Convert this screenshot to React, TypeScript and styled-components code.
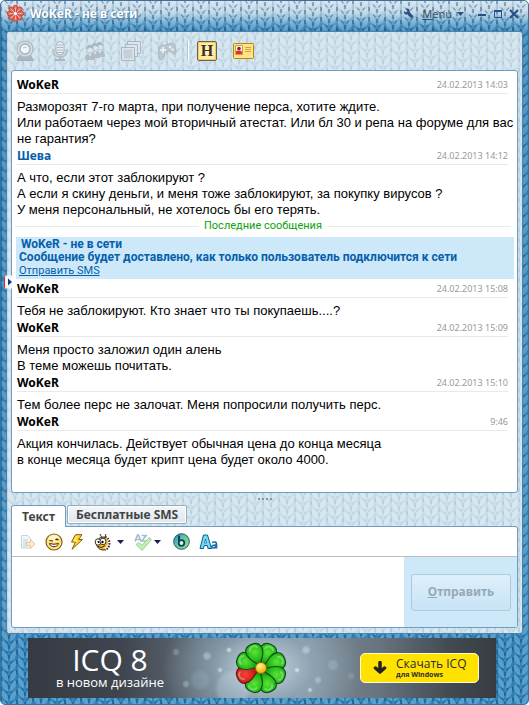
import React from "react";
import styled, { createGlobalStyle, css } from "styled-components";

const svgUrl = (svg: string) => `url("data:image/svg+xml,${encodeURIComponent(svg)}")`;

/* One tile of stocking stitch, drawn translucent so that it can lie on any colour. */
const knitTile = (dark: string, darkOpacity: number, lightOpacity: number) =>
  svgUrl(
    `<svg xmlns="http://www.w3.org/2000/svg" width="48" height="20" viewBox="0 0 48 20">
      <defs>
        <filter id="soft" x="-10" y="-10" width="70" height="40" filterUnits="userSpaceOnUse"><feGaussianBlur stdDeviation=".7"/></filter>
        <g id="s">
          <ellipse cx="4" cy="5" rx="2.4" ry="5.6" transform="rotate(-26 4 5)" fill="#fff" fill-opacity="${lightOpacity}"/>
          <ellipse cx="12" cy="5" rx="2.4" ry="5.6" transform="rotate(26 12 5)" fill="#fff" fill-opacity="${lightOpacity}"/>
          <path d="M8 4v4" stroke="${dark}" stroke-opacity="${darkOpacity}" stroke-width="2.2"/>
          <path d="M4 9.500l2.500 3M12 9.500l-2.500 3" stroke="${dark}" stroke-opacity="${darkOpacity}" stroke-width="1.200"/>
        </g>
        <g id="c">
          <path d="M0 -4v28" stroke="${dark}" stroke-opacity="${darkOpacity}" stroke-width="1.8" stroke-dasharray="4 6"/>
          <path d="M0 -4v28" stroke="${dark}" stroke-opacity="${darkOpacity / 3}" stroke-width="2"/>
        </g>
      </defs>
      <g fill="none" filter="url(#soft)">
        <use href="#c"/><use href="#c" x="16" y="3"/><use href="#c" x="32"/><use href="#c" x="48"/>
        <use href="#s" y="-10"/><use href="#s"/><use href="#s" y="10"/><use href="#s" y="20"/>
        <use href="#s" x="16" y="-13"/><use href="#s" x="16" y="-3"/><use href="#s" x="16" y="7"/><use href="#s" x="16" y="17"/>
        <use href="#s" x="32" y="-16"/><use href="#s" x="32" y="-6"/><use href="#s" x="32" y="4"/><use href="#s" x="32" y="14"/>
      </g>
    </svg>`
  );

const ui = `"Noto Sans", "Open Sans", sans-serif`;
const edge = "#6c9dc3";
const line = "#e9e9e9";

const GlobalStyle = createGlobalStyle`
  *, *::before, *::after { box-sizing: border-box; }
  body { margin: 0; background: #fff; font: 11px/16px ${ui}; color: #000; }
  button, textarea { font: inherit; color: inherit; margin: 0; border: 0; padding: 0; background: none; }
  p { margin: 0; }
  svg { display: block; }
`;

const Window = styled.main`
  display: flex;
  flex-direction: column;
  min-height: 100vh;
  padding: 0 5px 6px;
  border: 1px solid #39739c;
  border-radius: 5px;
  background:
    ${knitTile("#04335c", 0.34, 0.2)},
    linear-gradient(#d3e1ec 0, #b4d1e3 12px, #5b9fca 22px, #2a7bb3 31px, #3387bd 100%);
`;

const TitleBar = styled.header`
  display: flex;
  align-items: center;
  height: 30px;
  padding: 0 4px 5px 1px;
`;

const Title = styled.h1`
  flex: 1;
  margin: 0 0 0 6px;
  font: bold 12px/16px ${ui};
  color: #fff;
  text-shadow: 1px 1px 1px #4d7fa5, 0 0 2px #6d97b7;
`;

const MenuButton = styled.button`
  display: flex;
  align-items: center;
  gap: 5px;
  margin: 0 13px 0 8px;
  font-size: 11px;
  color: #3a5068;
`;

const IconButton = styled.button`
  display: flex;
  align-items: center;
  justify-content: center;
`;

const WindowButtons = styled.div`
  display: flex;
  gap: 6px;
`;

const Panel = styled.section`
  display: flex;
  flex-direction: column;
  flex: 1;
  padding: 0 4px 5px;
  border: 1px solid #4d82aa;
  border-radius: 3px;
  background: ${knitTile("#6b7f96", 0.15, 0.24)}, #cbdfeb;
`;

const Toolbar = styled.nav`
  display: flex;
  align-items: center;
  gap: 16px;
  height: 38px;
  padding: 0 4px;
`;

const ToolSeparator = styled.span`
  width: 2px;
  height: 20px;
  margin: 0 -8px 0 -6px;
  border-left: 1px solid #b4c5d1;
  background: #fff;
`;

const LogFrame = styled.div`
  position: relative;
  display: flex;
  flex: 1;
  flex-direction: column;
`;

const Log = styled.div`
  flex: 1;
  padding: 6px 3px;
  border: 1px solid ${edge};
  border-radius: 3px;
  background: #fff;
`;

const Handle = styled.button`
  position: absolute;
  top: 50%;
  left: -7px;
  width: 8px;
  height: 13px;
  padding-left: 3px;
  border-left: 1px solid #e81c1c;
  border-radius: 2px 0 0 2px;
  background: #f3f8fb;
  transform: translateY(-50%);
`;

const Message = styled.article`
  padding-left: 2px;
`;

const MessageHead = styled.header`
  display: flex;
  align-items: center;
  justify-content: space-between;
  height: 17px;
  margin-right: 6px;
  border-bottom: 1px solid ${line};
`;

const Author = styled.strong<{ $own?: boolean }>`
  font: bold 12px/16px ${ui};
  color: ${(p) => (p.$own ? "#0560ac" : "#000")};
`;

const Time = styled.time`
  font-size: 9px;
  color: #999;
`;

const MessageText = styled.p`
  padding: 5px 0 1px;
  font: 13px/16px "Liberation Sans", Arial, sans-serif;
  white-space: pre-line;
`;

const Divider = styled.div`
  display: flex;
  align-items: center;
  gap: 5px;
  height: 14px;
  margin-bottom: 4px;
  padding-right: 3px;
  font: 11px/14px Roboto, "Noto Sans", sans-serif;
  color: #0aa30a;

  &::before,
  &::after {
    content: "";
    flex: 1;
    height: 1px;
    background: ${line};
  }
`;

const Notice = styled.aside`
  height: 42px;
  margin: 0 0 2px 1px;
  padding: 1px 3px;
  background: #cde8f9;
  font: bold 12px/13px Roboto, "Noto Sans", sans-serif;
  color: #0560ac;
`;

const NoticeTitle = styled.p`
  padding-left: 2px;
`;

const NoticeLink = styled.a`
  display: block;
  font: 11px/13px Roboto, "Noto Sans", sans-serif;
  color: #0560ac;
`;

const Grip = styled.div`
  display: flex;
  align-items: center;
  justify-content: center;
  gap: 2px;
  height: 12px;
`;

const GripDot = styled.span`
  width: 2px;
  height: 2px;
  background: #8697a4;
`;

const Tabs = styled.div`
  display: flex;
  align-items: flex-start;
  gap: 1px;
  margin-bottom: -1px;
`;

const Tab = styled.button<{ $active?: boolean }>`
  height: 19px;
  padding: 0 8px;
  border: 1px solid #9aabb8;
  border-radius: 2px;
  background: linear-gradient(#f2f6f9, #dde7ee);
  box-shadow: inset 0 0 0 1px #fff;
  font: bold 12px/16px ${ui};
  color: #444;
  ${(p) =>
    p.$active &&
    css`
      z-index: 1;
      height: 22px;
      padding: 0 10px;
      border-color: ${edge};
      border-bottom: 0;
      border-radius: 3px 3px 0 0;
      background: #fff;
    `}
`;

const Composer = styled.form`
  border: 1px solid ${edge};
  border-radius: 0 3px 3px 3px;
  background: #fff;
`;

const FormatBar = styled.div`
  display: flex;
  align-items: center;
  height: 30px;
  padding: 0 8px;
  border-bottom: 1px solid #bdbdbd;
`;

const FormatButton = styled(IconButton)<{ $gap?: number }>`
  margin-right: ${(p) => p.$gap ?? 2}px;
`;

const EntryRow = styled.div`
  display: flex;
  height: 70px;
`;

const EntryText = styled.textarea`
  flex: 1;
  min-width: 0;
  padding: 4px;
  resize: none;
  outline: 0;
  font: 13px/16px "Liberation Sans", Arial, sans-serif;
`;

const SendArea = styled.div`
  display: flex;
  align-items: center;
  padding: 0 6px 0 7px;
  background: #cde8f9;
`;

const SendButton = styled.button`
  width: 100px;
  height: 37px;
  border: 1px solid #b0cadb;
  border-radius: 3px;
  background: linear-gradient(#def0fb, #c8e3f5);
  font: bold 12px/16px ${ui};
  color: #97a9b6;
`;

const Banner = styled.a`
  display: flex;
  align-items: center;
  justify-content: space-between;
  width: 468px;
  height: 60px;
  margin: 4px 0 0 22px;
  padding: 0 17px 0 30px;
  color: #fff;
  text-decoration: none;
  background:
    radial-gradient(circle at 205px 50px, rgba(215, 232, 242, 0.25) 0 14px, transparent 19px),
    radial-gradient(circle at 172px 42px, rgba(190, 212, 226, 0.15) 0 7px, transparent 11px),
    radial-gradient(circle at 158px 46px, rgba(180, 210, 225, 0.4) 0 2px, transparent 4px),
    radial-gradient(circle at 148px 14px, rgba(180, 210, 225, 0.3) 0 2px, transparent 4px),
    radial-gradient(circle at 179px 18px, rgba(215, 232, 242, 0.4) 0 2px, transparent 5px),
    radial-gradient(circle at 201px 12px, rgba(235, 245, 250, 0.6) 0 1px, transparent 3px),
    radial-gradient(circle at 210px 26px, rgba(235, 245, 250, 0.6) 0 1px, transparent 3px),
    radial-gradient(circle at 192px 32px, rgba(235, 245, 250, 0.5) 0 1px, transparent 3px),
    radial-gradient(circle at 269px 32px, rgba(235, 245, 250, 0.6) 0 1px, transparent 3px),
    radial-gradient(circle at 282px 52px, rgba(235, 245, 250, 0.5) 0 1px, transparent 3px),
    radial-gradient(circle at 278px 12px, rgba(225, 238, 246, 0.4) 0 2px, transparent 5px),
    radial-gradient(circle at 305px 27px, rgba(200, 220, 232, 0.2) 0 4px, transparent 6px),
    radial-gradient(circle at 323px 38px, rgba(190, 212, 226, 0.2) 0 2px, transparent 4px),
    radial-gradient(circle at 290px 42px, rgba(225, 238, 246, 0.3) 0 2px, transparent 4px),
    radial-gradient(ellipse 100px 70px at 234px 30px, rgba(205, 224, 235, 0.95), rgba(160, 187, 205, 0.5) 50%, transparent),
    linear-gradient(90deg, #363a43, #3f454e 20%, #626f7a 38%, #7d8c98 60%, #68747f 75%, #434a52 90%, #383c42);
`;

const BannerText = styled.span`
  display: flex;
  flex-direction: column;
  align-items: center;
  width: 104px;
  font: 13px/16px "Open Sans", "Noto Sans", sans-serif;
  white-space: nowrap;
`;

const BannerBrand = styled.span`
  font-size: 30px;
  line-height: 28px;
`;

const Download = styled.span`
  display: flex;
  align-items: center;
  gap: 9px;
  width: 119px;
  height: 30px;
  padding-left: 12px;
  border: 1px solid #fffbd0;
  border-radius: 5px;
  background: #ffe200;
  color: #2b2b2b;
`;

const DownloadText = styled.span`
  display: flex;
  flex-direction: column;
  font: bold 7px/10px "Open Sans", sans-serif;
  white-space: nowrap;
`;

const DownloadTitle = styled.span`
  font: 12px/13px "Open Sans", "Noto Sans", sans-serif;
`;

const petalAngles = [0, 45, 90, 135, 180, 225, 270, 315];

const SmallFlower = () => (
  <svg width="17" height="17" viewBox="-8 -8 16 16" aria-hidden="true">
    {petalAngles.map((a) => (
      <ellipse key={a} cx="0" cy="-5" rx="2.2" ry="2.9" fill="#ea6d5e" stroke="#b93e35" strokeWidth=".7" transform={`rotate(${a})`} />
    ))}
    {petalAngles.map((a) => (
      <path key={a} d="M0-5.5V-2" stroke="#ffc3b8" strokeWidth=".8" transform={`rotate(${a})`} />
    ))}
    <circle r="1.5" fill="#fff5ed" />
  </svg>
);

const BigFlower = () => (
  <svg width="54" height="54" viewBox="-27 -27 54 54" aria-hidden="true">
    <defs>
      <radialGradient id="green" gradientUnits="userSpaceOnUse" cx="0" cy="-17" r="15">
        <stop offset="0" stopColor="#5be534" />
        <stop offset=".5" stopColor="#27bd1c" />
        <stop offset="1" stopColor="#0a6f0c" />
      </radialGradient>
      <radialGradient id="red" gradientUnits="userSpaceOnUse" cx="0" cy="-17" r="15">
        <stop offset="0" stopColor="#ff4236" />
        <stop offset="1" stopColor="#9d0808" />
      </radialGradient>
      <radialGradient id="yellow" cx=".4" cy=".3" r=".7">
        <stop offset="0" stopColor="#fff68c" />
        <stop offset="1" stopColor="#efa900" />
      </radialGradient>
    </defs>
    {[23, 68, 113, 158, 203, 248, 293, 338].map((a) => (
      <g key={a} transform={`rotate(${a})`}>
        <path
          d="M0-3C-4-8-10-14-8-21C-6-27 6-27 8-21C10-14 4-8 0-3Z"
          fill={a === 248 ? "url(#red)" : "url(#green)"}
          stroke={a === 248 ? "#6e1712" : "#154f16"}
          strokeWidth="1.2"
        />
        <path d="M-4-20C-3-24 3-24 4-21" stroke="#e4ffd8" strokeOpacity=".35" strokeWidth="2" fill="none" strokeLinecap="round" />
      </g>
    ))}
    <circle r="5.5" fill="url(#yellow)" stroke="#996500" strokeWidth=".8" />
  </svg>
);

const Caret = ({ color = "#16224f" }: { color?: string }) => (
  <svg width="7" height="4" viewBox="0 0 7 4" aria-hidden="true">
    <path d="M0 0h7L3.5 4z" fill={color} />
  </svg>
);

const Wrench = () => (
  <svg width="11" height="11" viewBox="0 0 11 11" aria-hidden="true">
    <path d="M1 3L3 4.5L4.5 3L3 1C5-.2 7.500 1.500 6.500 4L10.500 8.200L8.500 10.500L4.500 6.300C2.500 7.300 .2 5.500 1 3Z" fill="#294f82" />
  </svg>
);

const Minimize = () => (
  <svg width="10" height="10" viewBox="0 0 10 10" aria-hidden="true"><path d="M1 5h8v2H1z" fill="#244f87" /></svg>
);
const Maximize = () => (
  <svg width="10" height="10" viewBox="0 0 10 10" aria-hidden="true"><path d="M1.500 1.500h7v7h-7z" fill="none" stroke="#244f87" /><path d="M1 1h8v2h-8z" fill="#244f87" /></svg>
);
const Close = () => (
  <svg width="10" height="10" viewBox="0 0 10 10" aria-hidden="true"><path d="M1 1l8 8M9 1L1 9" stroke="#244f87" strokeWidth="2.200" /></svg>
);

const Webcam = () => (
  <svg width="20" height="22" viewBox="0 0 20 22" aria-hidden="true">
    <path d="M2 20.500c0-3 2-5 8-5s8 2 8 5z" fill="#aab7c0" stroke="#a3b1bb" />
    <circle cx="10" cy="9" r="8" fill="#d3dee5" stroke="#b1bec7" strokeWidth="1.400" />
    <circle cx="10" cy="9" r="5" fill="#f1f6f9" stroke="#a2b1bc" strokeWidth="1.400" />
    <path d="M8 8q2-2 4 0" stroke="#b6c3cc" fill="none" />
  </svg>
);
const Microphone = () => (
  <svg width="18" height="22" viewBox="0 0 18 22" aria-hidden="true">
    <path d="M2 9v2c0 8 14 8 14 0V9" fill="#c9d5dd" stroke="#adbac4" strokeWidth="1.400" />
    <rect x="5" y="1.500" width="8" height="13.500" rx="4" fill="#e6eef2" stroke="#a9b7c1" />
    <path d="M6 5h6M6 7.500h6M6 10h6M6 12.500h6" stroke="#aab8c2" />
    <path d="M9 17v3M4 20h10" stroke="#a9b7c1" strokeWidth="2" />
  </svg>
);
const People = () => (
  <svg width="20" height="20" viewBox="0 0 20 20" aria-hidden="true">
    {[{ x: 10, y: -1 }, { x: 5, y: 0 }, { x: 0, y: 2 }].map(({ x, y }) => (
      <g key={x} transform={`translate(${x} ${y})`}>
        <path d="M0 17c0-5 1-6 5-6s5 1 5 6z" fill="#b0bdc7" />
        <circle cx="5" cy="6.500" r="3.500" fill="#dce5eb" stroke="#b4c1ca" strokeWidth=".8" />
        <path d="M1.500 6.500c-1-6 7-6 7 0l-3-2z" fill="#a7b5bf" />
        <path d="M4 11l1 3 1-3z" fill="#e6eef2" />
      </g>
    ))}
  </svg>
);
const Pictures = () => (
  <svg width="20" height="20" viewBox="0 0 20 20" aria-hidden="true">
    <g fill="#dce6ec" stroke="#a8b7c1"><path d="M6.500 .5h13v12h-13z" /><path d="M4.500 3.500h12v12h-12z" /><path d="M.5 6.500h13v13h-13z" /></g>
    <path d="M2.500 8.500h9v9h-9z" fill="#c3d0d8" />
  </svg>
);
const Gamepad = () => (
  <svg width="20" height="20" viewBox="0 0 20 20" aria-hidden="true">
    <path d="M1.500 7c1-3 4-4 6-2.500l4.500-1.500c3-2 5-1 6 3l1 4c0 4-3 4-5 1l-2-1-4 2-1 4c-1 4-5 4-5 0z" fill="#bac7d0" stroke="#aab8c2" />
    <path d="M6 6v6M3 9h6" stroke="#e6eef2" strokeWidth="2" />
    <circle cx="13" cy="6" r="1.300" fill="#e6eef2" /><circle cx="15.500" cy="8.500" r="1.300" fill="#e6eef2" />
  </svg>
);
const HistoryMark = styled.span`
  display: block;
  width: 20px;
  height: 20px;
  border: 1px solid #6d6250;
  border-radius: 2px;
  background: radial-gradient(#fff6cf, #ffe48c);
  box-shadow: inset 0 0 0 1px #f3cb62;
  color: #40331e;
  font: bold 16px/18px "Liberation Serif", serif;
`;
const Card = () => (
  <svg width="21" height="16" viewBox="0 0 21 16" aria-hidden="true">
    <rect x=".5" y=".5" width="20" height="15" rx="1" fill="#ffe486" stroke="#b98700" />
    <path d="M2.500 2.500h7v9h-7z" fill="#fff5ef" stroke="#bd852d" strokeWidth=".8" />
    <circle cx="6" cy="5.500" r="1.800" fill="#7a2c1a" /><path d="M3 11c0-4 1-3.500 3-3.500s3 0 3 3.500z" fill="#df302a" />
    <path d="M12 4.500h6M12 6.500h6M12 8.500h6" stroke="#c9a24a" />
  </svg>
);

const SendFile = () => (
  <svg width="16" height="14" viewBox="0 0 16 14" aria-hidden="true">
    <path d="M1.500 .5h6l3 3v9.500h-9z" fill="#f1f7fb" stroke="#c0d3df" />
    <path d="M3 5h5M3 7h4M3 9h3M3 11h4" stroke="#c0d3df" />
    <path d="M6.500 7.500h4v-3l4.500 4.500-4.500 4.500v-3h-4z" fill="#ffeccd" stroke="#e6c596" />
  </svg>
);
const Smile = () => (
  <svg width="18" height="18" viewBox="0 0 18 18" aria-hidden="true">
    <circle cx="9" cy="9" r="8" fill="#ffe07a" stroke="#84601d" strokeWidth="1.200" />
    <ellipse cx="9" cy="5.500" rx="5.500" ry="3.500" fill="#fff6c4" />
    <path d="M4.500 7.500L8 8M10.500 7q1.500-1.500 3 0" stroke="#372600" strokeWidth="1.200" fill="none" />
    <path d="M4.500 10.500q4.500 1.500 9 0c-1 4-8 4.500-9 0z" fill="#fff" stroke="#4b2b00" />
  </svg>
);
const Bolt = () => (
  <svg width="14" height="16" viewBox="0 0 14 16" aria-hidden="true">
    <path d="M5.500 .7L1.500 8h4L2 15.300L12.500 5.500H8.500L12 .7Z" fill="#ffd633" stroke="#8a5b00" />
    <path d="M7 2L4 7h3" stroke="#fff2a0" fill="none" />
  </svg>
);
const Bee = () => (
  <svg width="17" height="18" viewBox="0 0 17 18" aria-hidden="true">
    <path d="M8 5L6 1M11 4l1-3" stroke="#333" />
    <circle cx="9" cy="10.500" r="6.500" fill="#f6bd22" stroke="#2e2923" />
    <path d="M11 4c5 0 6 10 0 12" stroke="#fff" strokeWidth="2.500" fill="none" />
    <path d="M11 4c6 1 6 11 0 13" stroke="#392c20" strokeWidth="2" strokeDasharray="1.500 1.200" fill="none" />
    <ellipse cx="4" cy="9" rx="2.800" ry="3.200" fill="#fff" stroke="#39342e" /><ellipse cx="9" cy="8.500" rx="3" ry="3.300" fill="#fff" stroke="#39342e" />
    <circle cx="4.500" cy="9" r="1" /><circle cx="8.500" cy="9" r="1.200" />
    <path d="M4 13.500q4 2.500 7-1" stroke="#4a2100" fill="none" />
  </svg>
);
const Spelling = () => (
  <svg width="18" height="18" viewBox="0 0 18 18" aria-hidden="true">
    <path d="M1 8.500L3.500 2h1L7 8.500M2 6.500h4M7.500 2.500H12L8 8h5" fill="none" stroke="#a3c0cd" strokeWidth="1.700" />
    <path d="M2 11.500l3-2 3 3 7-8 2.500 2-9.500 11z" fill="#c6efad" stroke="#98cfa0" />
  </svg>
);
const Bing = () => (
  <svg width="17" height="17" viewBox="0 0 17 17" aria-hidden="true">
    <defs>
      <linearGradient id="bing" x1="0" x2="1" y2="1">
        <stop offset="0" stopColor="#2f86a0" />
        <stop offset=".4" stopColor="#5fbfa4" />
        <stop offset="1" stopColor="#a5e878" />
      </linearGradient>
    </defs>
    <circle cx="8.500" cy="8.500" r="7.800" fill="url(#bing)" stroke="#1b5a74" />
    <path d="M6 2.500V10" stroke="#0e3f6c" strokeWidth="2" />
    <circle cx="8.500" cy="10" r="2.800" fill="#d3f7d8" stroke="#0e3f6c" strokeWidth="1.800" />
  </svg>
);
const FontIcon = () => (
  <svg width="20" height="16" viewBox="0 0 20 16" aria-hidden="true">
    <path d="M4.500 1h4l4 13.500H9l-.7-3H5.200l-.7 3H1z" fill="#6fdcfb" stroke="#16598b" strokeLinejoin="round" />
    <path d="M6.500 5l-1 4h2z" fill="#fff" stroke="#16598b" strokeWidth=".7" />
    <path d="M13 8.500q4.500-1.500 4.500 1.500v4.500M17 11.200c-5-.5-5.500 2.800-2.800 2.800q2 0 2.800-1.500" fill="none" stroke="#1c6fa5" strokeWidth="1.700" />
  </svg>
);
const HandleArrow = () => (
  <svg width="5" height="9" viewBox="0 0 5 9" aria-hidden="true"><path d="M0 1l4 3.500L0 8z" fill="#18377b" /></svg>
);
const DownArrow = () => (
  <svg width="14" height="14" viewBox="0 0 14 14" aria-hidden="true"><path d="M7 1.500v9M2.500 7L7 11l4.500-4" fill="none" stroke="#222" strokeWidth="3.500" strokeLinecap="round" strokeLinejoin="round" /></svg>
);

type Entry = { author: string; own?: boolean; time: string; text: string };

const earlier: Entry[] = [
  {
    author: "WoKeR",
    time: "24.02.2013 14:03",
    text: "Разморозят 7-го марта, при получение перса, хотите ждите.\nИли работаем через мой вторичный атестат. Или бл 30 и репа на форуме для вас не гарантия?",
  },
  {
    author: "Шева",
    own: true,
    time: "24.02.2013 14:12",
    text: "А что, если этот заблокируют ?\nА если я скину деньги, и меня тоже заблокируют, за покупку вирусов ?\nУ меня персональный, не хотелось бы его терять.",
  },
];

const recent: Entry[] = [
  { author: "WoKeR", time: "24.02.2013 15:08", text: "Тебя не заблокируют. Кто знает что ты покупаешь....?" },
  { author: "WoKeR", time: "24.02.2013 15:09", text: "Меня просто заложил один алень\nВ теме можешь почитать." },
  { author: "WoKeR", time: "24.02.2013 15:10", text: "Тем более перс не залочат. Меня попросили получить перс." },
  {
    author: "WoKeR",
    time: "9:46",
    text: "Акция кончилась. Действует обычная цена до конца месяца\nв конце месяца будет крипт цена будет около 4000.",
  },
];

const Messages = ({ items }: { items: Entry[] }) => (
  <>
    {items.map((m) => (
      <Message key={m.time}>
        <MessageHead>
          <Author $own={m.own}>{m.author}</Author>
          <Time>{m.time}</Time>
        </MessageHead>
        <MessageText>{m.text}</MessageText>
      </Message>
    ))}
  </>
);

export default function App() {
  return (
    <>
      <GlobalStyle />
      <Window>
        <TitleBar>
          <SmallFlower />
          <Title>WoKeR - не в сети</Title>
          <IconButton aria-label="Настройки"><Wrench /></IconButton>
          <MenuButton><span><u>M</u>enu</span><Caret color="#294f82" /></MenuButton>
          <WindowButtons>
            <IconButton aria-label="Свернуть"><Minimize /></IconButton>
            <IconButton aria-label="Развернуть"><Maximize /></IconButton>
            <IconButton aria-label="Закрыть"><Close /></IconButton>
          </WindowButtons>
        </TitleBar>

        <Panel>
          <Toolbar>
            <IconButton aria-label="Видео" disabled><Webcam /></IconButton>
            <IconButton aria-label="Звонок" disabled><Microphone /></IconButton>
            <IconButton aria-label="Группа" disabled><People /></IconButton>
            <IconButton aria-label="Файлы" disabled><Pictures /></IconButton>
            <IconButton aria-label="Игры" disabled><Gamepad /></IconButton>
            <ToolSeparator />
            <IconButton aria-label="История"><HistoryMark>H</HistoryMark></IconButton>
            <IconButton aria-label="Информация"><Card /></IconButton>
          </Toolbar>

          <LogFrame>
            <Log>
              <Messages items={earlier} />
              <Divider>Последние сообщения</Divider>
              <Notice>
                <NoticeTitle>WoKeR - не в сети</NoticeTitle>
                <p>Сообщение будет доставлено, как только пользователь подключится к сети</p>
                <NoticeLink href="#sms">Отправить SMS</NoticeLink>
              </Notice>
              <Messages items={recent} />
            </Log>
            <Handle aria-label="Список контактов"><HandleArrow /></Handle>
          </LogFrame>

          <Grip><GripDot /><GripDot /><GripDot /><GripDot /></Grip>

          <Tabs role="tablist">
            <Tab role="tab" aria-selected="true" $active>Текст</Tab>
            <Tab role="tab" aria-selected="false">Бесплатные SMS</Tab>
          </Tabs>
          <Composer>
            <FormatBar>
              <FormatButton type="button" aria-label="Отправить файл" $gap={9}><SendFile /></FormatButton>
              <FormatButton type="button" aria-label="Смайлы" $gap={7}><Smile /></FormatButton>
              <FormatButton type="button" aria-label="Зуммер" $gap={10}><Bolt /></FormatButton>
              <FormatButton type="button" aria-label="Анимация" $gap={6}><Bee /></FormatButton>
              <FormatButton type="button" aria-label="Другие анимации" $gap={10}><Caret /></FormatButton>
              <FormatButton type="button" aria-label="Орфография"><Spelling /></FormatButton>
              <FormatButton type="button" aria-label="Язык" $gap={12}><Caret /></FormatButton>
              <FormatButton type="button" aria-label="Поиск" $gap={9}><Bing /></FormatButton>
              <FormatButton type="button" aria-label="Шрифт"><FontIcon /></FormatButton>
            </FormatBar>
            <EntryRow>
              <EntryText aria-label="Сообщение" />
              <SendArea>
                <SendButton disabled><u>О</u>тправить</SendButton>
              </SendArea>
            </EntryRow>
          </Composer>
        </Panel>

        <Banner href="#icq8">
          <BannerText><BannerBrand>ICQ 8</BannerBrand>в новом дизайне</BannerText>
          <BigFlower />
          <Download>
            <DownArrow />
            <DownloadText><DownloadTitle>Скачать ICQ</DownloadTitle>для Windows</DownloadText>
          </Download>
        </Banner>
      </Window>
    </>
  );
}
